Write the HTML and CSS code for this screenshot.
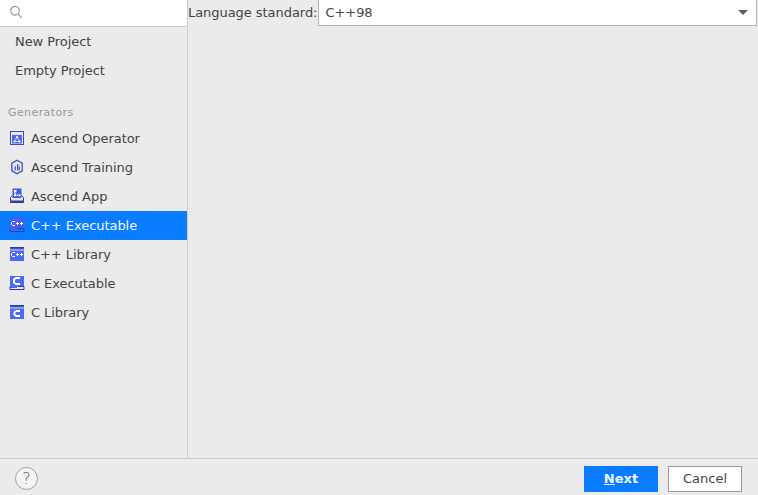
FILE: index.html
```html
<!DOCTYPE html>
<html lang="en">
<head>
  <meta charset="UTF-8">
  <title>New Project</title>
  <link rel="stylesheet" href="styles.css">
</head>
<body>
  <div class="dialog-body">
    <aside class="sidebar">
      <div class="search">
        <svg class="search-icon" width="14" height="14" viewBox="0 0 14 14" fill="none" stroke="#8c8c8c" stroke-width="1.1">
          <circle cx="6" cy="5.800" r="4.300"/>
          <path d="M9.200 9l3.400 3.800"/>
        </svg>
      </div>
      <ul class="project-list">
        <li class="row plain">New Project</li>
        <li class="row plain">Empty Project</li>
      </ul>
      <div class="group-label">Generators</div>
      <ul class="project-list">
        <li class="row">
          <svg class="row-icon" width="16" height="16" viewBox="0 0 16 16">
            <rect x="1.500" y="1.500" width="13" height="13" fill="#e4e8f8" stroke="#3a4ea8"/>
            <rect x="3" y="5" width="10" height="8.500" fill="#4d6bf0"/>
            <path d="M8 7L5.500 11.500H10.500Z" fill="none" stroke="#dfe4fb" stroke-width="0.800"/>
            <circle cx="8" cy="7" r="1.100" fill="#fff"/>
            <circle cx="5.500" cy="11.500" r="1.100" fill="#fff"/>
            <circle cx="10.500" cy="11.500" r="1.100" fill="#fff"/>
          </svg>
          Ascend Operator
        </li>
        <li class="row">
          <svg class="row-icon" width="16" height="16" viewBox="0 0 16 16">
            <path d="M8 1.200l5.200 3v7.600L8 14.800l-5.200-3V4.200Z" fill="#e4e8f8" stroke="#3f55b5" stroke-width="1.300"/>
            <path d="M5.500 11.500V8l1.500-1.500v5Z" fill="#4d6bf0"/>
            <path d="M8 11.500V4.800l1.500 1v5.700Z" fill="#3f55b5"/>
            <path d="M10.500 11V7.500" stroke="#4d6bf0"/>
          </svg>
          Ascend Training
        </li>
        <li class="row">
          <svg class="row-icon" width="16" height="16" viewBox="0 0 16 16">
            <path d="M1.500 9.500l2-2h9l2 2v5h-13Z" fill="#e4e8f8" stroke="#2f3f96"/>
            <rect x="3.500" y="0.500" width="9" height="9.500" fill="#3f5be0"/>
            <rect x="5" y="2" width="2.500" height="2.500" fill="#fff"/>
            <rect x="5" y="6.200" width="2" height="2" fill="#fff"/>
            <rect x="9.500" y="6.200" width="2" height="2" fill="#fff"/>
            <path d="M6 4.500v2M7 7.200h2.500" stroke="#fff"/>
            <rect x="2" y="12.500" width="12" height="1.500" fill="#2f3f96"/>
          </svg>
          Ascend App
        </li>
        <li class="row selected">
          <svg class="row-icon" width="16" height="16" viewBox="0 0 16 16">
            <rect x="1" y="1" width="14" height="10" fill="#4d5ff0"/>
            <rect x="1" y="11" width="7" height="2" fill="#4d5ff0"/>
            <path d="M6 4.500H3.500l-1 1v2l1 1H6M7 6.500h3M8.500 5v3M11 6.500h3M12.500 5v3" fill="none" stroke="#fff"/>
            <path d="M1 11.500v3h14v-3H8.500" fill="none" stroke="#2f3f96"/>
          </svg>
          C++ Executable
        </li>
        <li class="row">
          <svg class="row-icon" width="16" height="16" viewBox="0 0 16 16">
            <rect x="1" y="1" width="14" height="14" fill="#4d6bf0"/>
            <rect x="1" y="1" width="14" height="1.500" fill="#2f3f96"/>
            <rect x="1" y="3.500" width="14" height="1" fill="#c9d2f7"/>
            <path d="M6 6.500H3.500l-1 1v2l1 1H6M7 8.500h3M8.500 7v3M11 8.500h3M12.500 7v3" fill="none" stroke="#fff"/>
          </svg>
          C++ Library
        </li>
        <li class="row">
          <svg class="row-icon" width="16" height="16" viewBox="0 0 16 16">
            <rect x="1" y="1" width="14" height="10" fill="#4d6bf0"/>
            <rect x="1" y="11" width="7" height="2" fill="#4d6bf0"/>
            <path d="M11 3H7L5 4.500v3L7 9h4" fill="none" stroke="#fff" stroke-width="2"/>
            <path d="M1 11.500v3h14v-3H8.500" fill="none" stroke="#2f3f96"/>
          </svg>
          C Executable
        </li>
        <li class="row">
          <svg class="row-icon" width="16" height="16" viewBox="0 0 16 16">
            <rect x="1" y="1" width="14" height="14" fill="#4d6bf0"/>
            <rect x="1" y="1" width="14" height="1.500" fill="#2f3f96"/>
            <rect x="1" y="3.500" width="14" height="1" fill="#c9d2f7"/>
            <path d="M11 7H7.500L5.500 8.200v2.600L7.500 12H11" fill="none" stroke="#fff" stroke-width="2"/>
          </svg>
          C Library
        </li>
      </ul>
    </aside>
    <main class="settings">
      <label class="field-label">Language standard:</label>
      <div class="combo">
        <span>C++98</span>
        <span class="combo-arrow"></span>
      </div>
    </main>
  </div>
  <footer class="footer">
    <button class="help-button">?</button>
    <div class="footer-actions">
      <button class="btn btn-primary"><u>N</u>ext</button>
      <button class="btn">Cancel</button>
    </div>
  </footer>
</body>
</html>
```

FILE: styles.css
```css
* {
  box-sizing: border-box;
}

html, body {
  height: 100%;
}

body {
  margin: 0;
  display: flex;
  flex-direction: column;
  overflow: hidden;
  background-color: #ebebeb;
  color: #444;
  font-family: "DejaVu Sans", sans-serif;
  font-size: 13px;
  letter-spacing: -0.05px;
}

.dialog-body {
  flex: 1;
  display: flex;
  min-height: 0;
}

.sidebar {
  width: 188px;
  border-right: 1px solid #cdcdcd;
}

.search {
  height: 27px;
  padding: 5px 0 0 9px;
  background-color: white;
  border-bottom: 1px solid #cdcdcd;
}

.search-icon {
  display: block;
}

.project-list {
  list-style: none;
  margin: 0;
  padding: 0;
}

.row {
  height: 29px;
  display: flex;
  align-items: center;
  gap: 6px;
  padding-left: 9px;
}

.row.plain {
  padding-left: 15px;
}

.row.selected {
  background-color: #0a7cff;
  color: #f2f7ff;
}

/* the extra pixel keeps the 16px icon on whole pixels in a 29px row */
.row-icon {
  flex: none;
  margin-bottom: 1px;
}

.group-label {
  height: 39px;
  padding: 21px 0 0 8px;
  color: #999;
  font-size: 11px;
  line-height: 13px;
  letter-spacing: 0.4px;
}

.settings {
  flex: 1;
  display: flex;
  align-items: flex-start;
  gap: 1px;
  padding-right: 1px;
}

.field-label {
  line-height: 25px;
}

.combo {
  flex: 1;
  height: 26px;
  display: flex;
  align-items: center;
  justify-content: space-between;
  padding: 0 8px 0 6px;
  background-color: white;
  border: 1px solid #b4b4b4;
  border-top: none;
}

.combo-arrow {
  width: 0;
  height: 0;
  border-left: 5px solid transparent;
  border-right: 5px solid transparent;
  border-top: 5px solid #5f5f5f;
}

.footer {
  height: 37px;
  flex: none;
  display: flex;
  align-items: center;
  justify-content: space-between;
  padding: 3px 16px 0 15px;
  border-top: 1px solid #cdcdcd;
}

.help-button {
  width: 23px;
  height: 23px;
  padding: 0;
  background-color: #f4f4f4;
  border: 1px solid #a0a0a0;
  border-radius: 50%;
  color: #666;
  font-family: "DejaVu Sans", sans-serif;
  font-size: 16px;
  font-weight: 200;
}

.footer-actions {
  display: flex;
  gap: 10px;
}

.btn {
  width: 74px;
  height: 26px;
  padding: 0;
  background-color: white;
  border: 1px solid #9a9a9a;
  color: #444;
  font-family: inherit;
  font-size: 13px;
}

.btn-primary {
  background-color: #0a7cff;
  border-color: #0a7cff;
  color: #f2f7ff;
  font-weight: bold;
}
```
